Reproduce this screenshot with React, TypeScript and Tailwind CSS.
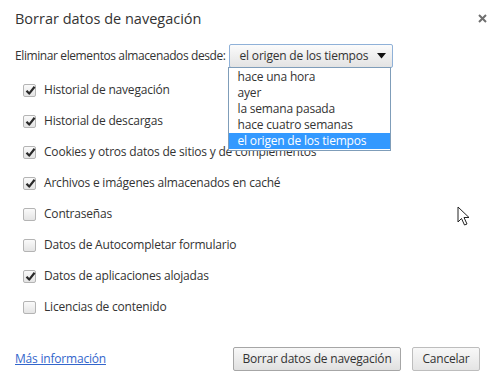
import React from "react";

const items = [
  { label: "Historial de navegación", checked: true },
  { label: "Historial de descargas", checked: true },
  { label: "Cookies y otros datos de sitios y de complementos", checked: true },
  { label: "Archivos e imágenes almacenados en caché", checked: true },
  { label: "Contraseñas", checked: false },
  { label: "Datos de Autocompletar formulario", checked: false },
  { label: "Datos de aplicaciones alojadas", checked: true },
  { label: "Licencias de contenido", checked: false },
];

const options = [
  "hace una hora",
  "ayer",
  "la semana pasada",
  "hace cuatro semanas",
  "el origen de los tiempos",
];

function Checkbox({ checked }: { checked: boolean }) {
  return (
    <span className="relative flex h-[13px] w-[13px] shrink-0 items-center justify-center rounded-[2px] border border-[#b4b4b4] bg-gradient-to-b from-[#fafafa] to-[#e4e4e4]">
      {checked && (
        <svg width="11" height="11" viewBox="0 0 11 11" className="absolute left-[1px] top-[0px]">
          <path d="M1.5 5.8 L4.2 8.6 L9.6 1.8" fill="none" stroke="#2a2a2a" strokeWidth="2.2" strokeLinejoin="round" />
        </svg>
      )}
    </span>
  );
}

export default function App() {
  return (
    <div className="relative h-[379px] w-[493px] overflow-hidden bg-white font-['Open_Sans',sans-serif] text-[12px] text-[#333]">
      {/* title bar */}
      <div className="flex items-start justify-between pl-[15px] pr-[6px] pt-[8px]">
        <h1 className="text-[14.5px] font-normal leading-[22px] text-[#333]">Borrar datos de navegación</h1>
        <svg width="9" height="9" viewBox="0 0 9 9" className="mt-[6px]">
          <path d="M1 1 L8 8 M8 1 L1 8" stroke="#6f6f6f" strokeWidth="2" />
        </svg>
      </div>

      {/* time range */}
      <div className="mt-[14px] flex items-center pl-[15px]">
        <span className="tracking-[-0.4px]">Eliminar elementos almacenados desde:</span>
        <div className="relative ml-[3px]">
          <div className="flex h-[24px] w-[164px] items-center justify-between rounded-[2px] border border-[#8fb1d8] bg-gradient-to-b from-[#fbfbfb] to-[#e3e3e3] pl-[10px] pr-[6px]">
            <span className="tracking-[-0.2px]">el origen de los tiempos</span>
            <svg width="9" height="6" viewBox="0 0 9 6">
              <path d="M0 0 H9 L4.5 5.5 Z" fill="#111" />
            </svg>
          </div>
          <ul className="absolute left-[-1px] top-[23px] z-10 w-[163px] border border-[#7f9db9] bg-white py-[1px]">
            {options.map((o, i) => (
              <li
                key={o}
                className={
                  "h-[16px] pl-[9px] leading-[16px] tracking-[-0.2px] " +
                  (i === options.length - 1 ? "bg-[#3399ff] text-white" : "text-[#333]")
                }
              >
                {o}
              </li>
            ))}
          </ul>
        </div>
      </div>

      {/* checkboxes */}
      <div className="mt-[14px] flex flex-col gap-[15px] pl-[23px]">
        {items.map((it) => (
          <label key={it.label} className="flex h-[16px] items-center gap-[8px]">
            <Checkbox checked={it.checked} />
            <span className="tracking-[-0.2px]">{it.label}</span>
          </label>
        ))}
      </div>

      {/* footer */}
      <div className="mt-[32px] flex items-center pl-[15px] pr-[13px]">
        <a href="#" className="tracking-[-0.2px] text-[#3366cc] underline">Más información</a>
        <div className="ml-auto flex gap-[11px]">
          <button className="h-[24px] w-[168px] rounded-[2px] border border-[#a6a6a6] bg-gradient-to-b from-[#f8f8f8] to-[#e0e0e0] text-[12px] tracking-[-0.2px] text-[#333]">
            Borrar datos de navegación
          </button>
          <button className="h-[24px] w-[68px] rounded-[2px] border border-[#bdbdbd] bg-gradient-to-b from-[#f8f8f8] to-[#e4e4e4] text-[12px] tracking-[-0.2px] text-[#333]">
            Cancelar
          </button>
        </div>
      </div>

      {/* mouse pointer */}
      <svg width="14" height="22" viewBox="0 0 14 22" className="absolute left-[457px] top-[206px]">
        <path d="M1 1 L1 16 L4.5 12.5 L7.5 19 L10 18 L7 11.5 L12 11.5 Z" fill="#fff" stroke="#222" strokeWidth="1" strokeLinejoin="miter" />
      </svg>
    </div>
  );
}
